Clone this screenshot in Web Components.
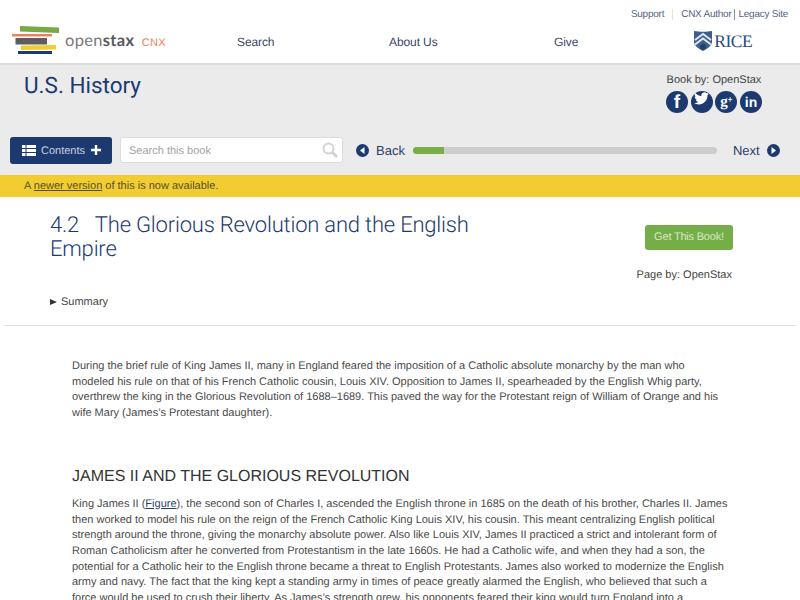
<!DOCTYPE html>
<html>
<head>
<meta charset="utf-8">
<title>U.S. History</title>
<style>
html, body { margin: 0; padding: 0; height: 600px; overflow: hidden; background: #fff; }
body { font-family: "Liberation Sans", Arial, sans-serif; text-rendering: geometricPrecision; }
</style>
</head>
<body>
<site-header></site-header>
<book-bar></book-bar>
<tool-bar></tool-bar>
<notice-bar>A <a>newer version</a> of this is now available.</notice-bar>
<page-title></page-title>
<page-content></page-content>

<script>
class SiteHeader extends HTMLElement {
    constructor() {
        super();
        this.attachShadow({ mode: 'open' });
        this.shadowRoot.innerHTML = `
            <style>
                :host { display: block; height: 63px; border-bottom: 2px solid #dcdcdc; color: #3f4a6b; }
                .top { height: 20px; display: flex; justify-content: flex-end; align-items: flex-end; padding-right: 12px; font-size: 10px; letter-spacing: -.25px; color: #57627f; }
                .top .sep { width: 1px; height: 11px; background: #e3e3e3; margin: 0 8px; }
                .top .bar { width: 1px; height: 11px; background: #8a93a8; margin: 0 3px; }
                .main { display: flex; align-items: center; height: 43px; }
                .logo { width: 220px; display: flex; align-items: center; padding-left: 12px; box-sizing: border-box; margin-top: -3px; }
                .word { font-family: "Lato", "Liberation Sans", sans-serif; font-size: 16.500px; color: #77787a; margin-left: 6px; letter-spacing: .3px; }
                .word b { color: #58595b; }
                .word span { color: #e9835a; font-size: 11px; margin-left: 3px; font-family: "Liberation Sans", sans-serif; }
                nav { display: flex; font-size: 12px; letter-spacing: -.1px; color: #3c4766; padding-top: 1px; }
                nav a { display: block; }
                .rice { display: flex; align-items: center; margin-left: 116px; margin-top: -1px; }
                .rice span { font-family: "Liberation Serif", serif; font-size: 17.500px; color: #2c4a7e; margin-left: 2px; letter-spacing: -.5px; }
            </style>
            <div class="top"><span>Support</span><i class="sep"></i><span>CNX Author</span><i class="bar"></i><span>Legacy Site</span></div>
            <div class="main">
                <div class="logo">
                    <svg width="47" height="30" viewBox="0 0 47 30">
                        <path d="M8 1 L47 2.500 L47 8 L8 6.500 Z" fill="#78a942"/>
                        <rect x="0" y="9" width="40" height="2.500" fill="#e9835a"/>
                        <rect x="3.500" y="13" width="31.500" height="6.500" fill="#5c5d60"/>
                        <path d="M9 20.500 L44 20 L44 24.500 L9 25 Z" fill="#f2cd32"/>
                        <rect x="6" y="26" width="34" height="3" fill="#1d3a70"/>
                    </svg>
                    <span class="word">open<b>stax</b> <span>CNX</span></span>
                </div>
                <nav>
                    <a style="width:152px;padding-left:17px">Search</a>
                    <a style="width:165px">About Us</a>
                    <a>Give</a>
                </nav>
                <div class="rice">
                    <svg width="18" height="20" viewBox="0 0 18 20">
                        <path d="M0 0 C5 1 13 1 18 0 L18 11 C18 15 13 18 9 20 C5 18 0 15 0 11 Z" fill="#3d5f8e"/>
                        <path d="M1 9 L9 3 L17 9 M1 13.500 L9 7.500 L17 13.500" fill="none" stroke="#e3e8f0" stroke-width="2"/>
                        <path d="M6 14.500 L9 12.500 L12 14.500 L12 17 L9 19 L6 17 Z" fill="#24406e"/>
                    </svg>
                    <span>RICE</span>
                </div>
            </div>
        `;
    }
}

class SocialIcon extends HTMLElement {
    constructor() {
        super();
        this.attachShadow({ mode: 'open' });
        this.shadowRoot.innerHTML = `
            <style>
                :host { display: flex; width: 22px; height: 22px; border-radius: 50%; background: #1d3a70; color: #fff; align-items: center; justify-content: center; }
                span { font-weight: bold; line-height: 22px; }
                ::slotted(sup) { font: bold 8px "Liberation Sans", sans-serif; vertical-align: 4px; line-height: 0; }
            </style>
            <span><slot></slot></span>
        `;
    }
}

class BookBar extends HTMLElement {
    constructor() {
        super();
        this.attachShadow({ mode: 'open' });
        this.shadowRoot.innerHTML = `
            <style>
                :host { display: block; height: 70px; background: #ebebeb; }
                .wrap { display: flex; justify-content: space-between; height: 100%; }
                h1 { margin: 7px 0 0 24px; font: 400 22.500px/28px Roboto, "Liberation Sans", sans-serif; color: #1d3a70; }
                .by { margin-right: 38px; font-size: 11px; color: #444; display: flex; flex-direction: column; align-items: center; padding-top: 9px; white-space: nowrap; }
                .icons { display: flex; gap: 2.700px; margin-top: 5px; }
            </style>
            <div class="wrap">
                <h1>U.S. History</h1>
                <div class="by">
                    <span>Book by: OpenStax</span>
                    <div class="icons">
                        <social-icon style="font:bold 19px 'Liberation Sans',sans-serif; padding-top: 1px; box-sizing: border-box">f</social-icon>
                        <social-icon>
                            <svg width="15" height="13" viewBox="0 0 24 20"><path fill="#fff" d="M24 2.400c-.9.400-1.800.7-2.800.8 1-.6 1.800-1.600 2.200-2.700-1 .6-2 1-3.100 1.200A4.900 4.900 0 0 0 11.900 6.200C7.800 6 4.200 4 1.700.9c-1.300 2.300-.7 5.200 1.500 6.600-.8 0-1.600-.2-2.200-.6 0 2.400 1.700 4.400 3.900 4.900-.7.200-1.500.2-2.200.1.600 2 2.400 3.400 4.600 3.400A9.900 9.900 0 0 1 0 17.300 14 14 0 0 0 21.500 4.900c1-.7 1.800-1.500 2.500-2.500z"/></svg>
                        </social-icon>
                        <social-icon style="font:bold 15px 'Liberation Serif',serif">g<sup>+</sup></social-icon>
                        <social-icon style="font:bold 14px 'Liberation Sans',sans-serif">in</social-icon>
                    </div>
                </div>
            </div>
        `;
    }
}

class ToolBar extends HTMLElement {
    constructor() {
        super();
        this.attachShadow({ mode: 'open' });
        this.shadowRoot.innerHTML = `
            <style>
                :host { display: flex; align-items: center; height: 40px; background: #ebebeb; padding: 0 0 10px 10px; box-sizing: border-box; font-size: 13px; color: #2c3f6b; }
                .contents { width: 102px; height: 27px; box-sizing: border-box; background: #1d3a70; border-radius: 3px; color: #c9d1e0; font-size: 11px; display: flex; align-items: center; padding-left: 12px; }
                .contents svg { flex: none; }
                .contents span { margin: 1px 6px 0 5px; }
                .search { width: 223px; height: 26px; box-sizing: border-box; margin: 0 0 0 8px; background: #fff; border: 1px solid #dcdcdc; border-radius: 3px; display: flex; align-items: center; justify-content: space-between; padding: 0 4px 0 8px; font-size: 11px; color: #a2a2a2; }
                .search span { margin-top: 1px; }
                .back { display: flex; align-items: center; margin-left: 13px; }
                .back span { margin: 1px 0 0 7px; }
                .track { width: 304px; height: 7px; margin: 0 16px 0 8px; border-radius: 4px; background: #cdcdcd; overflow: hidden; }
                .track i { display: block; width: 31px; height: 7px; background: #78ae47; }
                .next { display: flex; align-items: center; }
                .next span { margin: 1px 7px 0 0; }
            </style>
            <div class="contents">
                <svg width="14" height="11" viewBox="0 0 14 11" fill="#fff"><path d="M0 0h3.500v3H0zM4.500 0H14v3H4.500zM0 4h3.500v3H0zM4.500 4H14v3H4.500zM0 8h3.500v3H0zM4.500 8H14v3H4.500z"/></svg>
                <span>Contents</span>
                <svg width="10" height="10" viewBox="0 0 10 10" fill="#fff"><path d="M3.800 0h2.400v3.800H10v2.400H6.200V10H3.800V6.200H0V3.800h3.800z"/></svg>
            </div>
            <div class="search">
                <span>Search this book</span>
                <svg width="16" height="16" viewBox="0 0 16 16" fill="none" stroke="#d2d2d2"><circle cx="6.500" cy="6.500" r="5" stroke-width="2"/><path d="M10.500 10.500 L15 15" stroke-width="3"/></svg>
            </div>
            <div class="back">
                <svg width="13" height="13" viewBox="0 0 13 13"><circle cx="6.500" cy="6.500" r="6.500" fill="#1d3a70"/><path d="M8.500 3 L4 6.500 L8.500 10 Z" fill="#fff"/></svg>
                <span>Back</span>
            </div>
            <div class="track"><i></i></div>
            <div class="next">
                <span>Next</span>
                <svg width="13" height="13" viewBox="0 0 13 13"><circle cx="6.500" cy="6.500" r="6.500" fill="#1d3a70"/><path d="M4.500 3 L9 6.500 L4.500 10 Z" fill="#fff"/></svg>
            </div>
        `;
    }
}

class NoticeBar extends HTMLElement {
    constructor() {
        super();
        this.attachShadow({ mode: 'open' });
        this.shadowRoot.innerHTML = `
            <style>
                :host { display: block; height: 22px; background: #f2cd32; padding-left: 24px; font-size: 11px; line-height: 23px; color: #555028; }
                ::slotted(a) { text-decoration: underline; }
            </style>
            <slot></slot>
        `;
    }
}

class PageTitle extends HTMLElement {
    constructor() {
        super();
        this.attachShadow({ mode: 'open' });
        this.shadowRoot.innerHTML = `
            <style>
                :host { display: block; height: 129px; box-sizing: border-box; margin: 0 4px; border-bottom: 1px solid #e2e2e2; padding: 0 63px 0 46px; position: relative; }
                .row { display: flex; justify-content: space-between; }
                h2 { margin: 17px 0 0; width: 440px; font: 300 22px/24px Roboto, "Liberation Sans", sans-serif; letter-spacing: -.2px; color: #1d3a70; }
                h2 b { font-weight: inherit; margin-right: 11px; }
                .side { display: flex; flex-direction: column; align-items: flex-end; padding-top: 28px; }
                .btn { width: 88px; height: 25px; background: #75ae48; border-radius: 3px; color: #d5e8c4; font-size: 11px; letter-spacing: -.2px; line-height: 25px; text-align: center; }
                .side p { margin: 19px 1px 0 0; font-size: 11px; color: #444; }
                .summary { position: absolute; left: 46px; top: 99px; font-size: 11px; color: #444; display: flex; align-items: center; }
                .summary i { width: 0; height: 0; border-left: 7px solid #333; border-top: 3.500px solid transparent; border-bottom: 3.500px solid transparent; margin-right: 4px; }
            </style>
            <div class="row">
                <h2><b>4.2</b> The Glorious Revolution and the English Empire</h2>
                <div class="side">
                    <div class="btn">Get This Book!</div>
                    <p>Page by: OpenStax</p>
                </div>
            </div>
            <div class="summary"><i></i>Summary</div>
        `;
    }
}

class PageContent extends HTMLElement {
    constructor() {
        super();
        this.attachShadow({ mode: 'open' });
        this.shadowRoot.innerHTML = `
            <style>
                :host { display: block; padding: 33px 72px 0; font-size: 11px; line-height: 15.700px; color: #4a4a4a; }
                p { margin: 0; }
                h3 { margin: 45px 0 10px; font-size: 16px; line-height: 20px; font-weight: normal; color: #333; }
                u { color: #2c3f6b; }
            </style>
            <p>During the brief rule of King James II, many in England feared the imposition of a Catholic absolute monarchy by the man who modeled his rule on that of his French Catholic cousin, Louis XIV. Opposition to James II, spearheaded by the English Whig party, overthrew the king in the Glorious Revolution of 1688–1689. This paved the way for the Protestant reign of William of Orange and his wife Mary (James’s Protestant daughter).</p>
            <h3>JAMES II AND THE GLORIOUS REVOLUTION</h3>
            <p>King James II (<u>Figure</u>), the second son of Charles I, ascended the English throne in 1685 on the death of his brother, Charles II. James then worked to model his rule on the reign of the French Catholic King Louis XIV, his cousin. This meant centralizing English political strength around the throne, giving the monarchy absolute power. Also like Louis XIV, James II practiced a strict and intolerant form of Roman Catholicism after he converted from Protestantism in the late 1660s. He had a Catholic wife, and when they had a son, the potential for a Catholic heir to the English throne became a threat to English Protestants. James also worked to modernize the English army and navy. The fact that the king kept a standing army in times of peace greatly alarmed the English, who believed that such a force would be used to crush their liberty. As James’s strength grew, his opponents feared their king would turn England into a</p>
        `;
    }
}

customElements.define('site-header', SiteHeader);
customElements.define('social-icon', SocialIcon);
customElements.define('book-bar', BookBar);
customElements.define('tool-bar', ToolBar);
customElements.define('notice-bar', NoticeBar);
customElements.define('page-title', PageTitle);
customElements.define('page-content', PageContent);
</script>
</body>
</html>
